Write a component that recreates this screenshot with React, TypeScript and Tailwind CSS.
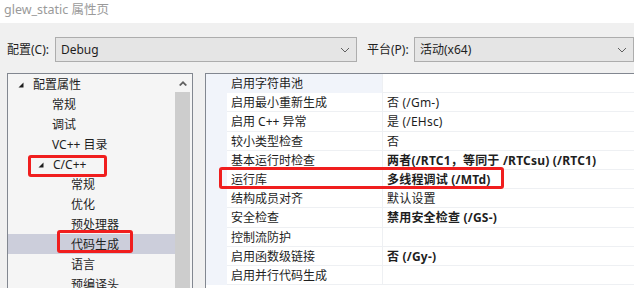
const font = '"Noto Sans", "Noto Sans CJK SC", sans-serif';

const Tri = () => (
  <svg width="6" height="6" viewBox="0 0 6 6" className="shrink-0">
    <polygon points="5.5,0.5 5.5,5.5 0.5,5.5" fill="#1e1e1e" />
  </svg>
);

const treeItems = [
  { label: '配置属性', indent: 18, tri: true },
  { label: '常规', indent: 52 },
  { label: '调试', indent: 52 },
  { label: 'VC++ 目录', indent: 52 },
  { label: 'C/C++', indent: 38, tri: true },
  { label: '常规', indent: 71 },
  { label: '优化', indent: 71 },
  { label: '预处理器', indent: 71 },
  { label: '代码生成', indent: 71, selected: true },
  { label: '语言', indent: 71 },
  { label: '预编译头', indent: 71 },
];

const props = [
  { name: '启用字符串池', value: '', first: true },
  { name: '启用最小重新生成', value: '否 (/Gm-)' },
  { name: '启用 C++ 异常', value: '是 (/EHsc)' },
  { name: '较小类型检查', value: '否' },
  { name: '基本运行时检查', value: '两者(/RTC1，等同于 /RTCsu) (/RTC1)', bold: true },
  { name: '运行库', value: '多线程调试 (/MTd)', bold: true },
  { name: '结构成员对齐', value: '默认设置' },
  { name: '安全检查', value: '禁用安全检查 (/GS-)', bold: true },
  { name: '控制流防护', value: '' },
  { name: '启用函数级链接', value: '否 (/Gy-)', bold: true },
  { name: '启用并行代码生成', value: '' },
];

const Combo = ({ text, width }: { text: string; width: string }) => (
  <div
    className={`${width} h-[25px] flex items-center justify-between border border-[#adadad] bg-[#e5e5e5] pl-[5px] pr-[6px] shrink-0`}>
    <span className="pt-[1px]">{text}</span>
    <svg width="10" height="6" viewBox="0 0 10 6">
      <polyline points="1,1 5,5 9,1" fill="none" stroke="#606060" strokeWidth="1" />
    </svg>
  </div>
);

export default function App() {
  return (
    <div
      className="relative w-[634px] h-[288px] overflow-hidden bg-[#f0f0f0] text-[12px] text-[#1e1e1e]"
      style={{ fontFamily: font }}>
      {/* title */}
      <div className="h-[23px] bg-white pl-[4px] pt-[1px] text-[#9a9a9a] leading-[18px] text-[12.5px]">
        glew_static 属性页
      </div>

      {/* config row */}
      <div className="flex items-center h-[50px] pt-[3px] pl-[7px]">
        <span className="w-[55px] pt-[1px]">配置(C):</span>
        <Combo text="Debug" width="w-[302px]" />
        <span className="ml-[10px] w-[54px] pt-[1px]">平台(P):</span>
        <Combo text="活动(x64)" width="w-[220px]" />
      </div>

      {/* panels */}
      <div className="flex pl-[7px]">
        {/* tree */}
        <div className="w-[186px] h-[215px] border border-[#828790] border-b-0 bg-[#f5f5f5] flex">
          <div className="w-[167px] flex flex-col">
            {treeItems.map((it, i) => (
              <div
                key={i}
                className={`h-[20px] shrink-0 flex items-center pt-[2px] ${it.selected ? 'bg-[#cccedb]' : ''}`}
                style={{ paddingLeft: it.indent - 8 }}>
                {it.tri && (
                  <span className="mr-[9px] flex">
                    <Tri />
                  </span>
                )}
                <span>{it.label}</span>
              </div>
            ))}
          </div>
          <div className="w-[15px] flex flex-col">
            <div className="h-[18px] flex items-center justify-center">
              <svg width="8" height="5" viewBox="0 0 8 5">
                <polygon points="4,0 8,4 6.5,5 4,2.5 1.5,5 0,4" fill="#606060" />
              </svg>
            </div>
            <div className="flex-1 bg-[#cdcdcd]" />
          </div>
        </div>

        {/* property grid */}
        <div className="ml-[12px] flex-1 h-[215px] border-l border-t border-[#828790] bg-white flex flex-col">
          {props.map((p, i) => (
            <div key={i} className="h-[19.2px] shrink-0 flex">
              <div className="w-[21px] bg-[#f1f4fa] shrink-0" />
              <div
                className={`w-[155px] shrink-0 flex items-center pl-[4px] pt-[2px] border-b ${
                  p.first ? 'bg-[#f1f4fa] border-[#f1f4fa]' : 'border-[#eef0f3]'
                }`}>
                {p.name}
              </div>
              <div
                className={`flex-1 flex items-center pl-[4px] pt-[2px] border-b border-l border-[#eef0f3] tracking-[0.2px] ${
                  p.bold ? 'font-bold' : ''
                }`}>
                {p.value}
              </div>
            </div>
          ))}
        </div>
      </div>

      {/* highlight boxes */}
      <div className="absolute left-[28px] top-[155px] w-[79px] h-[22px] border-[3px] border-[#f01e1e] rounded-[3px]" />
      <div className="absolute left-[57px] top-[230px] w-[76px] h-[23px] border-[3px] border-[#f01e1e] rounded-[3px]" />
      <div className="absolute left-[219px] top-[167px] w-[285px] h-[22px] border-[3px] border-[#f01e1e] rounded-[3px]" />
    </div>
  );
}
